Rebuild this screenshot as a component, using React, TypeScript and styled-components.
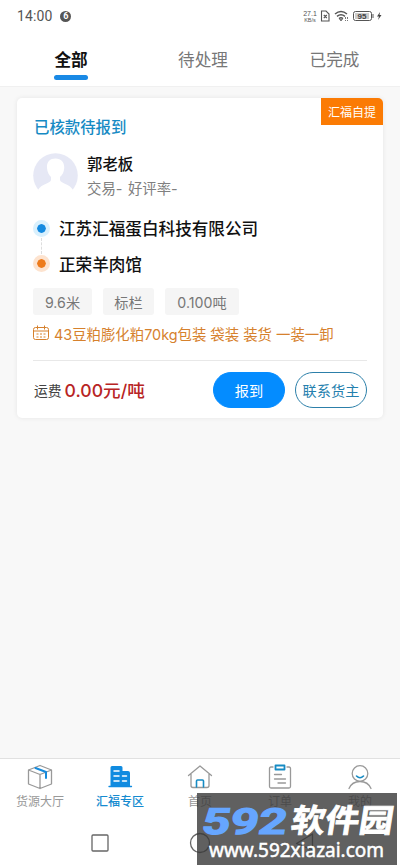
import React from 'react';
import styled, { createGlobalStyle } from 'styled-components';

const GlobalStyle = createGlobalStyle`
  *, *::before, *::after { box-sizing: border-box; }
  body { margin: 0; background: #f8f8f8; }
  body, button { font-family: Inter, "Noto Sans CJK SC", sans-serif; }
`;

const Screen = styled.div`
  position: relative;
  display: flex;
  flex-direction: column;
  width: 400px;
  height: 866px;
  overflow: hidden;
  background: #f8f8f8;
  color: #111;
  white-space: nowrap;
`;

const StatusBar = styled.header`
  display: flex;
  align-items: center;
  justify-content: space-between;
  height: 32px;
  padding: 0 18px 0 17px;
  background: #fff;
`;

const StatusGroup = styled.div<{ $gap: number }>`
  display: flex;
  align-items: center;
  gap: ${(p) => p.$gap}px;
`;

const Clock = styled.span`
  font: 14px/20px Roboto, sans-serif;
  letter-spacing: 0.1px;
  color: #555;
`;

const Badge = styled.span`
  width: 11px;
  height: 11px;
  border-radius: 50%;
  background: #555;
  color: #fff;
  font: 700 9px/11px Roboto, sans-serif;
  text-align: center;
`;

const Speed = styled.span`
  display: flex;
  flex-direction: column;
  align-items: center;
  width: 14px;
  font: 7px/7px "Liberation Sans", sans-serif;
  color: #555;
  small { font-size: 5.5px; line-height: 6px; }
`;

const Tabs = styled.nav`
  display: grid;
  grid-template-columns: 137px 132px 131px;
  height: 55px;
  background: #fff;
  border-bottom: 1px solid #f0f0f0;
`;

const Tab = styled.div<{ $active?: boolean }>`
  display: flex;
  flex-direction: column;
  align-items: center;
  padding-top: 16px;
  padding-left: ${(p) => (p.$active ? 5 : 0)}px;
  font-size: 16.6px;
  line-height: 24px;
  font-weight: ${(p) => (p.$active ? 700 : 400)};
  color: ${(p) => (p.$active ? '#111' : '#777')};
  &::after {
    content: "";
    width: 34px;
    height: 5px;
    margin-top: 3px;
    border-radius: 3px;
    background: ${(p) => (p.$active ? '#1989e5' : 'transparent')};
  }
`;

const Content = styled.main`
  flex: 1;
  padding: 11px 17px 0;
`;

const Card = styled.article`
  position: relative;
  height: 320px;
  padding: 19px 16px 0;
  border-radius: 5px;
  background: #fff;
  box-shadow: 0 0 5px rgba(0, 0, 0, 0.08);
`;

const Ribbon = styled.span`
  position: absolute;
  top: 0;
  right: 0;
  width: 62px;
  height: 27px;
  border-radius: 0 5px 0 0;
  background: #fb7b04;
  color: #fff;
  font-size: 12px;
  line-height: 30px;
  text-align: center;
`;

const Status = styled.h2`
  margin: 0;
  padding-left: 1px;
  font-size: 15.4px;
  line-height: 22px;
  font-weight: 500;
  color: #168ac4;
`;

const Person = styled.div`
  display: flex;
  gap: 9px;
  height: 45px;
  margin-top: 14px;
`;

const PersonText = styled.div`
  font-size: 14.4px;
  line-height: 24px;
  word-spacing: 1.5px;
  color: #808080;
`;

const Name = styled.div`
  font-size: 15.4px;
  line-height: 24px;
  font-weight: 500;
  color: #111;
`;

const Route = styled.div`
  position: relative;
  display: grid;
  grid-template-rows: 36px 35px;
  margin-top: 12px;
`;

const Stop = styled.div<{ $color: string; $halo: string }>`
  display: flex;
  align-items: center;
  gap: 9px;
  font-size: 16.6px;
  font-weight: 500;
  &::before {
    content: "";
    width: 17px;
    height: 17px;
    border: 4.5px solid ${(p) => p.$halo};
    border-radius: 50%;
    background: ${(p) => p.$color};
    background-clip: padding-box;
  }
`;

const Connector = styled.span`
  position: absolute;
  left: 8px;
  top: 28px;
  height: 16px;
  border-left: 1px dashed #ddd;
`;

const Tags = styled.div`
  display: flex;
  gap: 11px;
  margin-top: 7px;
`;

const Tag = styled.span<{ $width: number }>`
  width: ${(p) => p.$width}px;
  height: 27px;
  border-radius: 3px;
  background: #f5f5f5;
  color: #777;
  font-size: 14.2px;
  line-height: 29px;
  text-align: center;
`;

const Goods = styled.div`
  display: flex;
  align-items: center;
  gap: 5px;
  height: 24px;
  margin-top: 6px;
  font-size: 14.4px;
  color: #d6812d;
`;

const Footer = styled.footer`
  display: flex;
  align-items: center;
  height: 58px;
  margin-top: 15px;
  padding-left: 1px;
  border-top: 1px solid #e8e8e8;
  font-size: 13.8px;
  color: #444;
`;

const Price = styled.strong`
  flex: 1;
  margin-left: 3px;
  font-size: 17.6px;
  font-weight: 500;
  color: #b82424;
`;

const Button = styled.button<{ $primary?: boolean }>`
  width: 72px;
  height: 36px;
  margin-left: ${(p) => (p.$primary ? 0 : 10)}px;
  padding: 0;
  border: 1px solid ${(p) => (p.$primary ? '#048cff' : '#2c7fa9')};
  border-radius: 18px;
  background: ${(p) => (p.$primary ? '#048cff' : '#fff')};
  color: ${(p) => (p.$primary ? '#fff' : '#2580ae')};
  font-size: 14.2px;
`;

const BottomNav = styled.nav`
  display: grid;
  grid-template-columns: repeat(5, 80px);
  height: 62px;
  border-top: 1px solid #e1e1e1;
  background: #fff;
`;

const NavItem = styled.div<{ $active?: boolean }>`
  display: flex;
  flex-direction: column;
  align-items: center;
  padding-top: 3px;
  font-size: 12px;
  line-height: 18px;
  font-weight: ${(p) => (p.$active ? 500 : 400)};
  color: ${(p) => (p.$active ? '#168bd0' : '#999')};
  svg { margin-bottom: 3px; }
`;

const SystemNav = styled.div`
  display: flex;
  align-items: flex-start;
  height: 46px;
  padding: 12px 89px 0;
  background: #fff;
  svg { overflow: visible; }
`;

const Watermark = styled.div`
  position: absolute;
  left: 197px;
  bottom: 1px;
  width: 200px;
  height: 72px;
  background: rgba(56, 56, 56, 0.8);
`;

const navItems = [
  {
    label: '货源大厅',
    icon: (
      <>
        <path d="M3.500 8 15 3.500 26.500 8v14L15 26.500 3.500 22ZM3.500 8 15 12.500 26.500 8M15 12.500v14" stroke="#999" />
        <path d="M10.500 6 21 10v6" stroke="#168bdc" strokeWidth="2" />
      </>
    ),
  },
  {
    label: '汇福专区',
    active: true,
    icon: (
      <>
        <path d="M5.500 24V5.500q0-1.500 1.500-1.500h9q1.500 0 1.500 1.500V9H23q2 0 2 2v13Z" fill="#108be0" />
        <path d="M4 24.500h22.500" stroke="#108be0" />
        <path d="M9 9h5M9 14h5M9 19h5M17.500 14h4M17.500 19h4" stroke="#fff" strokeWidth="1.500" />
      </>
    ),
  },
  {
    label: '首页',
    icon: (
      <>
        <path d="M3.500 13.500 15 4l11.500 9.500M6 12v11.500q0 2 2 2h14q2 0 2-2V12" stroke="#999" />
        <path d="M11.500 25v-6q0-1 1-1h5q1 0 1 1v6" stroke="#168bc4" strokeWidth="1.600" />
      </>
    ),
  },
  {
    label: '订单',
    icon: (
      <>
        <path d="M8 5H6q-1.500 0-1.500 1.500v18Q4.500 26 6 26h18q1.500 0 1.500-1.500v-18Q25.500 5 24 5h-2M9.500 12.500h7M9.500 17h11M13 21h7.500" stroke="#999" />
        <rect x="10.500" y="3.500" width="9" height="4" stroke="#168bc4" strokeWidth="1.800" />
      </>
    ),
  },
  {
    label: '我的',
    icon: (
      <>
        <circle cx="15" cy="11.500" r="7.800" stroke="#999" />
        <path d="M4 26.500Q7 19.500 15 19.500T26 26.500" stroke="#999" />
        <path d="M11.500 14q3.500 3.500 7 0" stroke="#168bc4" strokeWidth="1.600" />
      </>
    ),
  },
];

const StatusIcons = () => (
  <svg width="62" height="14" viewBox="0 0 62 14" fill="none" stroke="#555">
    <path d="M1.500 2h4.500l3 3v7H1.500ZM3.800 6l3 3m0-3-3 3" strokeWidth="1.100" />
    <path d="M15 5q6-5 12 0M17 7.300q4-3 8 0M19 9.600q2-1.500 4 0" strokeWidth="1.500" />
    <path d="m19.500 10.500 1.500 1.500 1.500-1.500Z" fill="#555" strokeWidth=".5" />
    <path d="M25.500 8v4M27.500 8v4" strokeWidth=".8" strokeDasharray="2 1" />
    <rect x="33.500" y="2.500" width="18" height="9" rx="2" />
    <rect x="35" y="4" width="14" height="6" fill="#ccc" stroke="none" />
    <path d="M53 5v4" />
    <text x="37.500" y="10" fill="#444" stroke="none" fontFamily="Liberation Sans" fontWeight="700" fontSize="8">95</text>
    <path d="m60 3-3 4.500h2L58 11l3.500-5h-2Z" fill="#444" stroke="none" />
  </svg>
);

export default function App() {
  return (
    <>
      <GlobalStyle />
      <Screen>
        <StatusBar>
          <StatusGroup $gap={8}><Clock>14:00</Clock><Badge>6</Badge></StatusGroup>
          <StatusGroup $gap={3}><Speed>27.1<small>KB/s</small></Speed><StatusIcons /></StatusGroup>
        </StatusBar>
        <Tabs><Tab $active>全部</Tab><Tab>待处理</Tab><Tab>已完成</Tab></Tabs>
        <Content>
          <Card>
            <Ribbon>汇福自提</Ribbon>
            <Status>已核款待报到</Status>
            <Person>
              <svg width="45" height="45" viewBox="0 0 45 45">
                <circle cx="22.500" cy="22.500" r="22.300" fill="#e6e8f5" />
                <path d="M22.500 5.500c-6 0-9 4-8.500 9.500.3 4 1.800 7 4 9V27c0 3-10 4-13 10a22.300 22.300 0 0 0 35 0C37 31 27 30 27 27v-3c2.500-2 4-5 4.200-9C31.500 9.500 28.500 5.500 22.500 5.500Z" fill="#fff" />
              </svg>
              <PersonText><Name>郭老板</Name>交易- 好评率-</PersonText>
            </Person>
            <Route>
              <Stop $color="#148ae0" $halo="#d9f0fd">江苏汇福蛋白科技有限公司</Stop>
              <Stop $color="#ed7b1c" $halo="#fde3cf">正荣羊肉馆</Stop>
              <Connector />
            </Route>
            <Tags><Tag $width={59}>9.6米</Tag><Tag $width={51}>标栏</Tag><Tag $width={74}>0.100吨</Tag></Tags>
            <Goods>
              <svg width="16" height="16" viewBox="0 0 16 16" fill="none" stroke="currentColor">
                <rect x=".5" y="2.500" width="15" height="12" rx="2" />
                <path d="M.5 6h15M4.500.5v4M11.500.5v4" />
                <path d="M3.500 9h9M3.500 12h9" strokeDasharray="2 1.500" />
              </svg>
              <span>43豆粕膨化粕70kg包装 袋装 装货 一装一卸</span>
            </Goods>
            <Footer>
              <span>运费</span><Price>0.00元/吨</Price>
              <Button $primary>报到</Button><Button>联系货主</Button>
            </Footer>
          </Card>
        </Content>
        <BottomNav>
          {navItems.map((item) => (
            <NavItem key={item.label} $active={item.active}>
              <svg width="30" height="28" viewBox="0 0 30 28" fill="none" strokeWidth="1.300" strokeLinecap="round" strokeLinejoin="round">{item.icon}</svg>
              {item.label}
            </NavItem>
          ))}
        </BottomNav>
        <SystemNav>
          <svg width="222" height="22" viewBox="0 0 222 22" fill="none" stroke="#666" strokeWidth="1.300">
            <rect x="3" y="3" width="16" height="16" rx="1" />
            <circle cx="111" cy="11" r="9.500" />
            <path d="m207.500 11.500 16-9.500v16Z" strokeLinejoin="round" />
          </svg>
        </SystemNav>
        <Watermark>
          <svg width="200" height="72" viewBox="0 0 200 72">
            <g transform="skewX(-9)">
              <text x="10" y="41.500" fontSize="36" fontWeight="700" fontFamily="Roboto" fill="#66a6ff" stroke="#66a6ff" strokeWidth="1.200" textLength="85" lengthAdjust="spacingAndGlyphs">592</text>
              <text x="99" y="39.500" fontSize="32" fontWeight="700" fontFamily="Noto Sans CJK SC" fill="#fff" stroke="#fff" strokeWidth=".8" textLength="102" lengthAdjust="spacingAndGlyphs">软件园</text>
            </g>
            <text x="12" y="64" fontSize="19" fontFamily="Noto Sans" fill="#fff" stroke="#fff" strokeWidth=".5" textLength="175" lengthAdjust="spacingAndGlyphs">www.592xiazai.com</text>
          </svg>
        </Watermark>
      </Screen>
    </>
  );
}
